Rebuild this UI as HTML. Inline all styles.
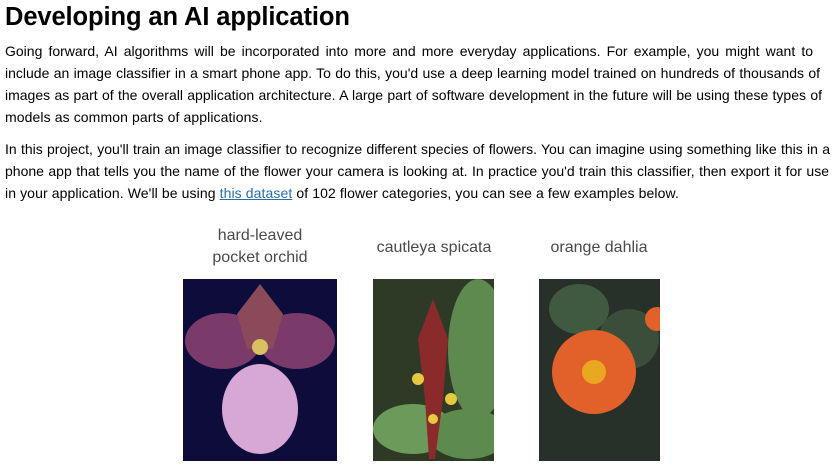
<!DOCTYPE html>
<html><head><meta charset="utf-8"><style>
body{margin:0;width:837px;height:473px;background:#fff;font-family:"Liberation Sans",Arial,sans-serif;color:#000;overflow:hidden;position:relative}
h1{position:absolute;left:5px;top:3px;margin:0;font-size:25.5px;font-weight:bold;letter-spacing:-0.1px}
.l{position:absolute;left:5px;margin:0;font-size:14px;line-height:21.8px;white-space:nowrap;text-align:justify;text-align-last:justify;letter-spacing:0}
.n{text-align:left;text-align-last:left;letter-spacing:0.1px}
a{color:#296eaa;text-decoration:underline}
.cap{position:absolute;font-family:"Liberation Sans",sans-serif;font-size:16px;color:#4a4a4a;text-align:center;line-height:22px}
svg{position:absolute}
</style></head><body>
<h1>Developing an AI application</h1>
<div class="l" style="top:41px;width:808px">Going forward, AI algorithms will be incorporated into more and more everyday applications. For example, you might want to</div>
<div class="l" style="top:63px;width:815px">include an image classifier in a smart phone app. To do this, you'd use a deep learning model trained on hundreds of thousands of</div>
<div class="l" style="top:85px;width:817px">images as part of the overall application architecture. A large part of software development in the future will be using these types of</div>
<div class="l n" style="top:107px">models as common parts of applications.</div>
<div class="l" style="top:139px;width:825px">In this project, you'll train an image classifier to recognize different species of flowers. You can imagine using something like this in a</div>
<div class="l" style="top:161px;width:824px">phone app that tells you the name of the flower your camera is looking at. In practice you'd train this classifier, then export it for use</div>
<div class="l n" style="top:183px">in your application. We'll be using <a>this dataset</a> of 102 flower categories, you can see a few examples below.</div>
<div class="cap" style="left:190px;top:225px;width:140px">hard-leaved<br>pocket orchid</div>
<div class="cap" style="left:360px;top:237px;width:148px">cautleya spicata</div>
<div class="cap" style="left:530px;top:237px;width:138px">orange dahlia</div>
<svg style="left:183px;top:279px" width="154" height="182" viewBox="0 0 154 182">
<rect width="154" height="182" fill="#0d0c3a"/>
<ellipse cx="40" cy="62" rx="38" ry="28" fill="#7a3a6a"/>
<ellipse cx="114" cy="62" rx="38" ry="28" fill="#7a3a6a"/>
<path d="M77 5 L100 35 L90 70 L64 70 L54 35Z" fill="#8a4a5a"/>
<ellipse cx="77" cy="130" rx="38" ry="45" fill="#d7a8d6"/>
<circle cx="77" cy="68" r="8" fill="#d9c060"/>
</svg>
<svg style="left:373px;top:279px" width="121" height="182" viewBox="0 0 121 182">
<rect width="121" height="182" fill="#2e3a26"/>
<ellipse cx="105" cy="70" rx="30" ry="70" fill="#5f8a4f"/>
<ellipse cx="40" cy="150" rx="40" ry="25" fill="#6c9a5a"/>
<ellipse cx="95" cy="155" rx="40" ry="25" fill="#5d8a4d"/>
<path d="M60 20 L75 60 L70 120 L62 180 L56 180 L52 120 L45 60Z" fill="#8a2a2a"/>
<circle cx="45" cy="100" r="6" fill="#e8c840"/><circle cx="78" cy="120" r="6" fill="#e8c840"/><circle cx="60" cy="140" r="5" fill="#e8c840"/>
</svg>
<svg style="left:539px;top:279px" width="121" height="182" viewBox="0 0 121 182">
<rect width="121" height="182" fill="#28302a"/>
<ellipse cx="40" cy="30" rx="30" ry="25" fill="#3f5a40"/>
<ellipse cx="90" cy="60" rx="30" ry="30" fill="#3a4e3a"/>
<circle cx="55" cy="93" r="42" fill="#e2602a"/>
<circle cx="55" cy="93" r="12" fill="#e8a820"/>
<circle cx="118" cy="40" r="12" fill="#e2602a"/>
</svg>
</body></html>
